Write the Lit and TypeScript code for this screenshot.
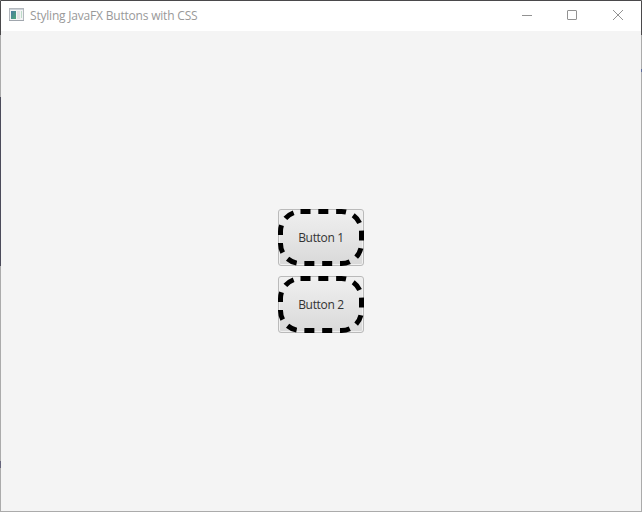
import { LitElement, html, css } from "lit";
import { customElement, property } from "lit/decorators.js";

@customElement("dashed-button")
export class DashedButton extends LitElement {
  @property() label = "";

  static styles = css`
    :host { display: block; }
    button {
      position: relative;
      display: flex;
      align-items: center;
      justify-content: center;
      box-sizing: border-box;
      width: 86px;
      height: 57px;
      padding: 0;
      border: 1px solid #bababa;
      border-radius: 3px;
      background: linear-gradient(#f0f0f0, #d9d9d9);
      box-shadow: inset 0 0 0 1px #f0f0f0;
      color: #333;
      font: 12px/16px "Open Sans", "Noto Sans", sans-serif;
      letter-spacing: -0.32px;
    }
    svg { position: absolute; left: -1px; top: -1px; }
    .dash { fill: none; stroke: #000; stroke-width: 5; stroke-dasharray: 10 7.82; }
  `;

  render() {
    return html`<button>
      <svg width="86" height="57"><rect class="dash" x="2.5" y="2.5" width="81" height="52" rx="20"></rect></svg>
      <span>${this.label}</span>
    </button>`;
  }
}

@customElement("app-root")
export class AppRoot extends LitElement {
  static styles = css`
    :host { display: block; }
    .window {
      display: flex;
      flex-direction: column;
      box-sizing: border-box;
      width: 642px;
      height: 512px;
      border: 1px solid #ababab;
      border-top-color: #4a494b;
      background: #f4f4f4;
      position: relative;
    }
    .edge { position: absolute; width: 1px; }
    .l1 { left: -1px; top: 0; height: 34px; background: #4a494b; }
    .l2 { left: -1px; top: 96px; height: 169px; background: #4b4b5a; }
    .l3 { left: -1px; top: 460px; height: 7px; background: #66657b; }
    .r1 { right: -1px; top: 0; height: 34px; background: #4a494b; }
    .r2 { right: -1px; top: 68px; height: 3px; background: #5c6b9c; }
    .bar {
      display: flex;
      align-items: center;
      height: 30px;
      background: #fff;
      padding-left: 8px;
    }
    .title {
      flex: 1;
      margin-left: 6px;
      color: #999;
      font: 12px/16px "Open Sans", "Noto Sans", sans-serif;
      letter-spacing: -0.2px;
      white-space: nowrap;
    }
    .glyph { fill: none; stroke: #929292; stroke-width: 1; }
    .content {
      flex: 1;
      display: flex;
      flex-direction: column;
      align-items: center;
      justify-content: center;
      gap: 10px;
    }
  `;

  render() {
    return html`<div class="window">
      <div class="bar">
        <svg width="15" height="16" viewBox="0 0 15 16">
          <defs>
            <linearGradient id="pane" x1="0" y1="0" x2="1" y2="1">
              <stop offset="0" stop-color="#487aa0"></stop>
              <stop offset="1" stop-color="#4da878"></stop>
            </linearGradient>
          </defs>
          <rect x=".5" y=".5" width="14" height="12" fill="#f3f4f5" stroke="#b3b8be"></rect>
          <rect x="1" y="1" width="13" height="1" fill="#cbd1d7"></rect>
          <rect x="2" y="3" width="5" height="8" fill="url(#pane)"></rect>
          <rect x="8" y="3" width="3" height="8" fill="#e2e3e4"></rect>
          <rect x="12" y="3" width="1" height="7" fill="#bddbc8"></rect>
          <rect x="0" y="12" width="15" height="1" fill="#a0a6ad"></rect>
        </svg>
        <div class="title">Styling JavaFX Buttons with CSS</div>
        <svg width="136" height="30" viewBox="0 0 136 30">
          <g class="glyph">
            <path d="M17 14.5h10"></path>
            <rect x="62.5" y="9.5" width="9" height="9" rx=".5"></rect>
            <path d="M108 9l10 10M118 9l-10 10"></path>
          </g>
        </svg>
      </div>
      <div class="content">
        <dashed-button label="Button 1"></dashed-button>
        <dashed-button label="Button 2"></dashed-button>
      </div>
      <div class="edge l1"></div>
      <div class="edge l2"></div>
      <div class="edge l3"></div>
      <div class="edge r1"></div>
      <div class="edge r2"></div>
    </div>`;
  }
}
